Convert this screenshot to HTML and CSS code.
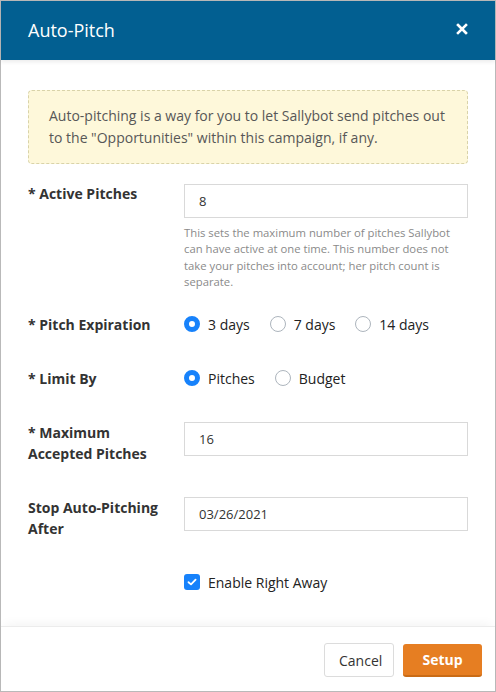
FILE: index.html
```html
<!DOCTYPE html>
<html>
<head>
<meta charset="utf-8">
<link rel="stylesheet" href="styles.css">
</head>
<body>
<div class="modal">
  <div class="modal-header">
    <h1 class="modal-title">Auto-Pitch</h1>
    <button class="close" aria-label="Close">
      <svg width="12" height="12" viewBox="0 0 12 12"><path d="M2 2 L10 10 M10 2 L2 10" stroke="#fff" stroke-width="2.6" stroke-linecap="square"/></svg>
    </button>
  </div>
  <div class="modal-body">
    <div class="alert">Auto-pitching is a way for you to let Sallybot send pitches out to the "Opportunities" within this campaign, if any.</div>

    <div class="row row-active">
      <label class="label">* Active Pitches</label>
      <div class="field">
        <div class="input">8</div>
        <p class="help">This sets the maximum number of pitches Sallybot can have active at one time. This number does not take your pitches into account; her pitch count is separate.</p>
      </div>
    </div>

    <div class="row">
      <label class="label">* Pitch Expiration</label>
      <div class="field radios">
        <span class="opt"><span class="radio checked"></span>3 days</span>
        <span class="opt"><span class="radio"></span>7 days</span>
        <span class="opt"><span class="radio"></span>14 days</span>
      </div>
    </div>

    <div class="row">
      <label class="label">* Limit By</label>
      <div class="field radios">
        <span class="opt"><span class="radio checked"></span>Pitches</span>
        <span class="opt"><span class="radio"></span>Budget</span>
      </div>
    </div>

    <div class="row">
      <label class="label">* Maximum Accepted Pitches</label>
      <div class="field"><div class="input">16</div></div>
    </div>

    <div class="row">
      <label class="label">Stop Auto-Pitching After</label>
      <div class="field"><div class="input">03/26/2021</div></div>
    </div>

    <div class="row">
      <span class="label"></span>
      <div class="field radios">
        <span class="opt"><span class="checkbox"><svg width="10" height="8" viewBox="0 0 10 8"><path d="M1.5 4.2 L4 6.4 L8.6 1.6" fill="none" stroke="#fff" stroke-width="1.8" stroke-linecap="round" stroke-linejoin="round"/></svg></span>Enable Right Away</span>
      </div>
    </div>
  </div>
  <div class="modal-footer">
    <button class="btn btn-default">Cancel</button>
    <button class="btn btn-primary">Setup</button>
  </div>
</div>
</body>
</html>
```
FILE: styles.css
```css
* { box-sizing: border-box; }
html, body { margin: 0; padding: 0; background: #fff; }
body { font-family: "Open Sans", "Noto Sans", sans-serif; color: #333; }

.modal {
  width: 496px;
  height: 692px;
  border: 1px solid #b9b9b9;
  display: flex;
  flex-direction: column;
  background: #fff;
}

.modal-header {
  height: 59px;
  background: #025f91;
  display: flex;
  align-items: center;
  justify-content: space-between;
  padding: 0 27px 0 27px;
  box-shadow: 0 2px 4px rgba(0,0,0,0.08);
  position: relative;
  z-index: 1;
}
.modal-title {
  margin: 0;
  font-size: 18px;
  font-weight: 400;
  color: #fff;
  line-height: 24px;
  padding-bottom: 2px;
}
.close {
  background: none;
  border: 0;
  padding: 0;
  width: 12px;
  height: 12px;
  display: flex;
  margin-top: -4px;
}

.modal-body {
  flex: 1;
  padding: 30px 27px 0 27px;
}

.alert {
  background: #fef8da;
  border: 1px dashed #d9d3a9;
  border-radius: 4px;
  padding: 14px 14px 14px 20px;
  font-size: 14px;
  line-height: 22px;
  color: #575757;
}

.row {
  display: grid;
  grid-template-columns: 156px 1fr;
  margin-top: 33px;
}
.row-active { margin-top: 20px; }
.row-active + .row { margin-top: 23px; }
.row-active .label { margin-top: -1px; }

.label {
  font-size: 14px;
  font-weight: 700;
  line-height: 21px;
  color: #333;
  padding-right: 10px;
}

.input {
  height: 34px;
  border: 1px solid #d9d9d9;
  padding: 0 14px;
  font-size: 13px;
  line-height: 32px;
  color: #333;
}

.help {
  margin: 7px 0 0 0;
  max-width: 276px;
  font-size: 11.3px;
  line-height: 16.4px;
  color: #8a8a8a;
}

.radios {
  display: flex;
  align-items: center;
  height: 21px;
  gap: 20px;
}
.opt {
  display: flex;
  align-items: center;
  font-size: 14px;
  line-height: 21px;
  color: #222;
}
.radio {
  width: 16px;
  height: 16px;
  border-radius: 50%;
  border: 1px solid #adb5bd;
  background: #fff;
  margin-right: 8px;
  flex: none;
}
.radio.checked {
  border: 5px solid #1782fb;
  background: #fff;
}
.checkbox {
  width: 16px;
  height: 16px;
  border-radius: 3px;
  background: #1782fb;
  margin-right: 8px;
  display: flex;
  align-items: center;
  justify-content: center;
  flex: none;
}

.modal-footer {
  height: 65px;
  border-top: 1px solid #ececec;
  box-shadow: 0 -6px 10px -4px rgba(0,0,0,0.05);
  display: flex;
  justify-content: flex-end;
  align-items: flex-start;
  padding: 16px 13px 0 0;
  gap: 9px;
}
.btn {
  font-family: "Open Sans", "Noto Sans", sans-serif;
  font-size: 14px;
  height: 34px;
  border-radius: 3px;
  padding: 0 14px;
  cursor: pointer;
}
.btn-default {
  background: #fff;
  border: 1px solid #dcdcdc;
  color: #333;
  width: 70px;
}
.btn-primary {
  background: #e67e22;
  border: 0;
  border-bottom: 2px solid #c96b16;
  color: #fff;
  font-weight: 700;
  width: 79px;
  margin-top: 1px;
  height: 33px;
}
```
